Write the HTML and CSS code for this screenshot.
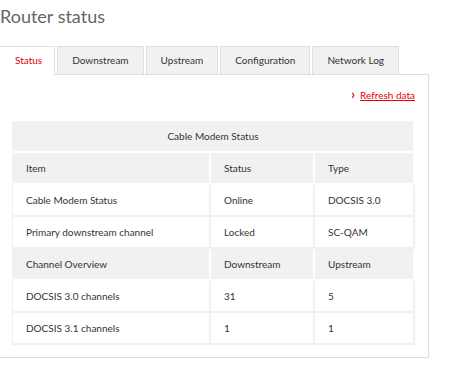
FILE: index.html
```html
<!DOCTYPE html>
<html lang="en">
<head>
    <meta charset="UTF-8">
    <title>Router status</title>
    <link rel="stylesheet" href="styles.css">
</head>
<body>
    <div class="page">
        <h1 class="title">Router status</h1>

        <div class="tabs">
            <div class="tab active">Status</div>
            <div class="tab">Downstream</div>
            <div class="tab">Upstream</div>
            <div class="tab">Configuration</div>
            <div class="tab">Network Log</div>
        </div>

        <div class="panel">
            <div class="refresh">
                <a href="#"><span class="chevron">&#x203A;</span><span class="link-text">Refresh data</span></a>
            </div>

            <table class="status-table">
                <tr class="grey">
                    <td colspan="3" class="center">Cable Modem Status</td>
                </tr>
                <tr class="grey">
                    <td class="c1">Item</td>
                    <td class="c2">Status</td>
                    <td class="c3">Type</td>
                </tr>
                <tr>
                    <td>Cable Modem Status</td>
                    <td>Online</td>
                    <td>DOCSIS 3.0</td>
                </tr>
                <tr>
                    <td>Primary downstream channel</td>
                    <td>Locked</td>
                    <td>SC-QAM</td>
                </tr>
                <tr class="grey">
                    <td>Channel Overview</td>
                    <td>Downstream</td>
                    <td>Upstream</td>
                </tr>
                <tr>
                    <td>DOCSIS 3.0 channels</td>
                    <td>31</td>
                    <td>5</td>
                </tr>
                <tr>
                    <td>DOCSIS 3.1 channels</td>
                    <td>1</td>
                    <td>1</td>
                </tr>
            </table>
        </div>
    </div>
</body>
</html>
```

FILE: styles.css
```css
* {
    box-sizing: border-box;
}

body {
    margin: 0;
    font-family: Lato, 'Liberation Sans', sans-serif;
    color: #333;
    background: #fff;
}

.page {
    margin-left: -2px;
    width: 431px;
}

.title {
    margin: 0;
    padding: 5px 0 0 2px;
    height: 46px;
    font-size: 18px;
    font-weight: normal;
    color: #666;
}

.tabs {
    display: flex;
    gap: 2px;
    align-items: flex-end;
}

.tab {
    flex-shrink: 0;
    white-space: nowrap;
    height: 28px;
    line-height: 27px;
    padding: 0 14px;
    font-size: 10px;
    background: #f1f1f1;
    border: 1px solid #dedede;
    border-bottom: none;
    color: #333;
}

.tab.active {
    height: 29px;
    margin-bottom: -1px;
    padding: 0 12px 0 16px;
    background: #fff;
    color: #e60000;
    position: relative;
    z-index: 1;
}

.panel {
    border: 1px solid #dedede;
    height: 284px;
    padding: 11px 13px 0 13px;
}

.refresh {
    text-align: right;
    height: 35px;
    font-size: 10px;
}

.refresh a {
    color: #e60000;
    text-decoration: none;
}

.chevron {
    font-weight: bold;
    font-size: 13px;
    margin-right: 5px;
}

.link-text {
    text-decoration: underline;
}

.status-table {
    width: 403px;
    border-collapse: separate;
    border-spacing: 0;
    font-size: 10px;
    border-left: 1px solid #f0f0f0;
}

.status-table td {
    height: 32px;
    padding: 0 13px;
    border-right: 2px solid #f0f0f0;
    border-bottom: 2px solid #f0f0f0;
    background: #fff;
}

.status-table tr.grey td {
    background: #f1f1f1;
    border-right-color: #fff;
    border-bottom-color: #fff;
}

.status-table td.center {
    text-align: center;
}

.status-table td.c1 {
    width: 198px;
}

.status-table td.c2 {
    width: 104px;
}
```
